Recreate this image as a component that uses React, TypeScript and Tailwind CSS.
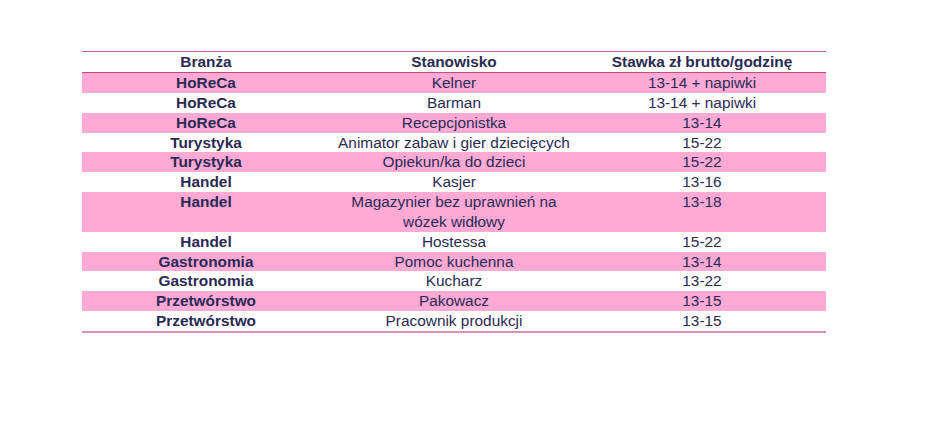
const rows: { branza: string; stanowisko: string[]; stawka: string; pink: boolean }[] = [
  { branza: "HoReCa", stanowisko: ["Kelner"], stawka: "13-14 + napiwki", pink: true },
  { branza: "HoReCa", stanowisko: ["Barman"], stawka: "13-14 + napiwki", pink: false },
  { branza: "HoReCa", stanowisko: ["Recepcjonistka"], stawka: "13-14", pink: true },
  { branza: "Turystyka", stanowisko: ["Animator zabaw i gier dziecięcych"], stawka: "15-22", pink: false },
  { branza: "Turystyka", stanowisko: ["Opiekun/ka do dzieci"], stawka: "15-22", pink: true },
  { branza: "Handel", stanowisko: ["Kasjer"], stawka: "13-16", pink: false },
  { branza: "Handel", stanowisko: ["Magazynier bez uprawnień na", "wózek widłowy"], stawka: "13-18", pink: true },
  { branza: "Handel", stanowisko: ["Hostessa"], stawka: "15-22", pink: false },
  { branza: "Gastronomia", stanowisko: ["Pomoc kuchenna"], stawka: "13-14", pink: true },
  { branza: "Gastronomia", stanowisko: ["Kucharz"], stawka: "13-22", pink: false },
  { branza: "Przetwórstwo", stanowisko: ["Pakowacz"], stawka: "13-15", pink: true },
  { branza: "Przetwórstwo", stanowisko: ["Pracownik produkcji"], stawka: "13-15", pink: false },
]

export default function App() {
  return (
    <div
      className="w-[940px] h-[428px] bg-white pt-[51px] pl-[82px] text-[15.4px] leading-[20px] text-[#2a2a55]"
      style={{ fontFamily: '"Liberation Sans", Arial, sans-serif' }}
    >
      <div className="w-[744px]">
        <div className="h-px bg-[#d9589c]" />
        <div className="grid grid-cols-3 h-[20px] font-bold">
          <div className="text-center">Branża</div>
          <div className="text-center">Stanowisko</div>
          <div className="text-center">Stawka zł brutto/godzinę</div>
        </div>
        <div className="h-px bg-[#c24d89]" />
        {rows.map((r, i) => (
          <div
            key={i}
            className={`grid grid-cols-3 ${r.stanowisko.length > 1 ? "h-[39.7px]" : "h-[19.85px]"} ${r.pink ? "bg-[#ffaad4]" : "bg-white"}`}
          >
            <div className="text-center font-bold">{r.branza}</div>
            <div className="text-center">
              {r.stanowisko.map((s, j) => (
                <div key={j}>{s}</div>
              ))}
            </div>
            <div className="text-center">{r.stawka}</div>
          </div>
        ))}
        <div className="h-[2px] bg-[#dc8fb8]" />
      </div>
    </div>
  )
}
